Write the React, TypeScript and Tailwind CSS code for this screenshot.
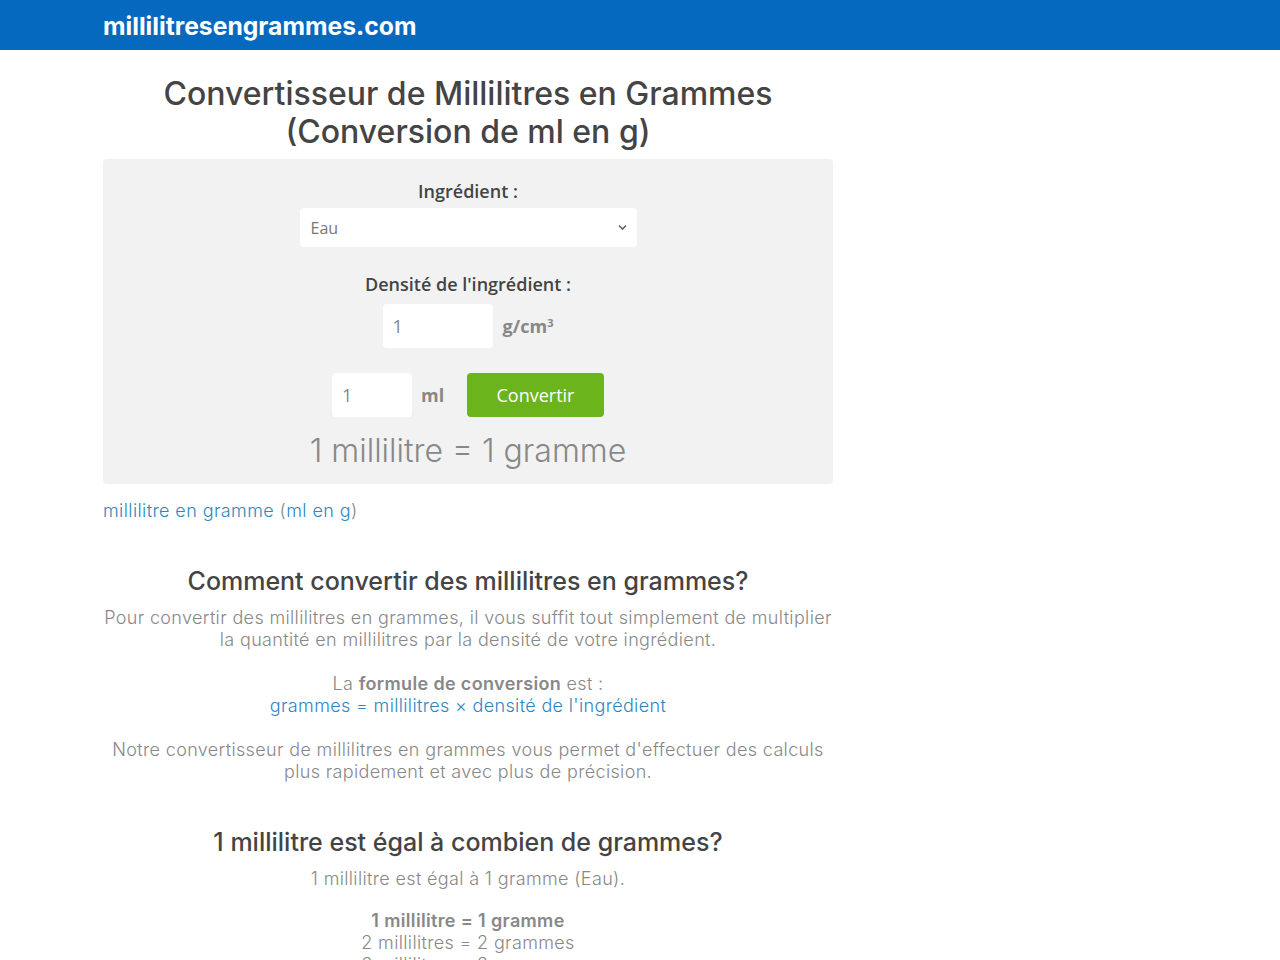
import { useState } from 'react'

const raleway = { fontFamily: 'Inter, Lato, sans-serif' }

export default function App() {
  const [ml, setMl] = useState('1')
  const [density, setDensity] = useState('1')

  return (
    <div className="min-h-screen bg-white" style={raleway}>
      <header className="h-[50px] bg-[#0569bf]">
        <div className="mx-auto w-[1074px] pt-[10px]">
          <span className="text-[24.7px] font-bold leading-[32px] text-white">millilitresengrammes.com</span>
        </div>
      </header>

      <div className="mx-auto w-[1074px]">
        <main className="w-[730px] pt-[25px]">
          <h1 className="text-center text-[32px] font-medium leading-[38px] text-[#444]">
            Convertisseur de Millilitres en Grammes
            <br />
            (Conversion de ml en g)
          </h1>

          <div className="mt-[8px] rounded-[4px] bg-[#f2f2f2] pt-[20px] pb-[13px] text-center font-['Open_Sans',sans-serif]">
            <label className="block text-[18px] font-semibold leading-[24px] text-[#444]">Ingrédient :</label>
            <div className="mt-[5px] flex justify-center">
              <div className="relative h-[39px] w-[337px] rounded-[4px] bg-white">
                <select className="h-full w-full appearance-none bg-transparent pl-[11px] text-[16px] text-[#777] outline-none">
                  <option>Eau</option>
                </select>
                <svg className="pointer-events-none absolute right-[10px] top-[16px]" width="9" height="7" viewBox="0 0 9 7">
                  <path d="M1 1.5 L4.5 5 L8 1.5" fill="none" stroke="#666" strokeWidth="1.6" />
                </svg>
              </div>
            </div>

            <label className="mt-[25px] block text-[18px] font-semibold leading-[24px] text-[#444]">Densité de l'ingrédient :</label>
            <div className="mt-[8px] flex items-center justify-center gap-[10px]">
              <input
                value={density}
                onChange={e => setDensity(e.target.value)}
                className="h-[44px] w-[110px] rounded-[4px] bg-white pl-[10px] text-[18px] text-[#888] outline-none"
              />
              <span className="text-[18px] font-bold text-[#888]">
                g/cm<sup className="text-[11px]">3</sup>
              </span>
            </div>

            <div className="mt-[25px] flex items-center justify-center">
              <input
                value={ml}
                onChange={e => setMl(e.target.value)}
                className="h-[44px] w-[80px] rounded-[4px] bg-white pl-[10px] text-[18px] text-[#888] outline-none"
              />
              <span className="ml-[9px] w-[46px] text-left text-[18px] font-bold text-[#888]">ml</span>
              <button className="h-[44px] w-[137px] rounded-[4px] bg-[#6cb41c] text-[18px] text-white">Convertir</button>
            </div>

            <div className="mt-[14px] text-[32px] font-light leading-[40px] text-[#888]" style={raleway}>
              1 millilitre = 1 gramme
            </div>
          </div>

          <p className="mt-[16px] text-[18px] font-light leading-[22px] tracking-[0.4px] text-[#888]">
            <a href="#" className="text-[#2e86c1]">millilitre en gramme</a> (<a href="#" className="text-[#2e86c1]">ml en g</a>)
          </p>

          <h2 className="mt-[44px] text-center text-[25px] font-medium leading-[30px] text-[#444]">
            Comment convertir des millilitres en grammes?
          </h2>
          <div className="mt-[11px] text-center text-[18px] font-light leading-[22px] tracking-[0.35px] text-[#888]">
            <p>
              Pour convertir des millilitres en grammes, il vous suffit tout simplement de multiplier
              <br />
              la quantité en millilitres par la densité de votre ingrédient.
            </p>
            <p className="mt-[22px]">
              La <strong className="font-semibold">formule de conversion</strong> est :
              <br />
              <span className="text-[#2e86c1]">grammes = millilitres × densité de l'ingrédient</span>
            </p>
            <p className="mt-[22px]">
              Notre convertisseur de millilitres en grammes vous permet d'effectuer des calculs
              <br />
              plus rapidement et avec plus de précision.
            </p>
          </div>

          <h2 className="mt-[44px] text-center text-[25px] font-medium leading-[30px] text-[#444]">
            1 millilitre est égal à combien de grammes?
          </h2>
          <div className="mt-[11px] text-center text-[18px] font-light leading-[22px] tracking-[0.35px] text-[#888]">
            <p>1 millilitre est égal à 1 gramme (Eau).</p>
            <p className="mt-[20px]">
              <strong className="font-semibold">1 millilitre = 1 gramme</strong>
              <br />
              2 millilitres = 2 grammes
              <br />
              3 millilitres = 3 grammes
              <br />
              4 millilitres = 4 grammes
            </p>
          </div>
        </main>
      </div>
    </div>
  )
}
